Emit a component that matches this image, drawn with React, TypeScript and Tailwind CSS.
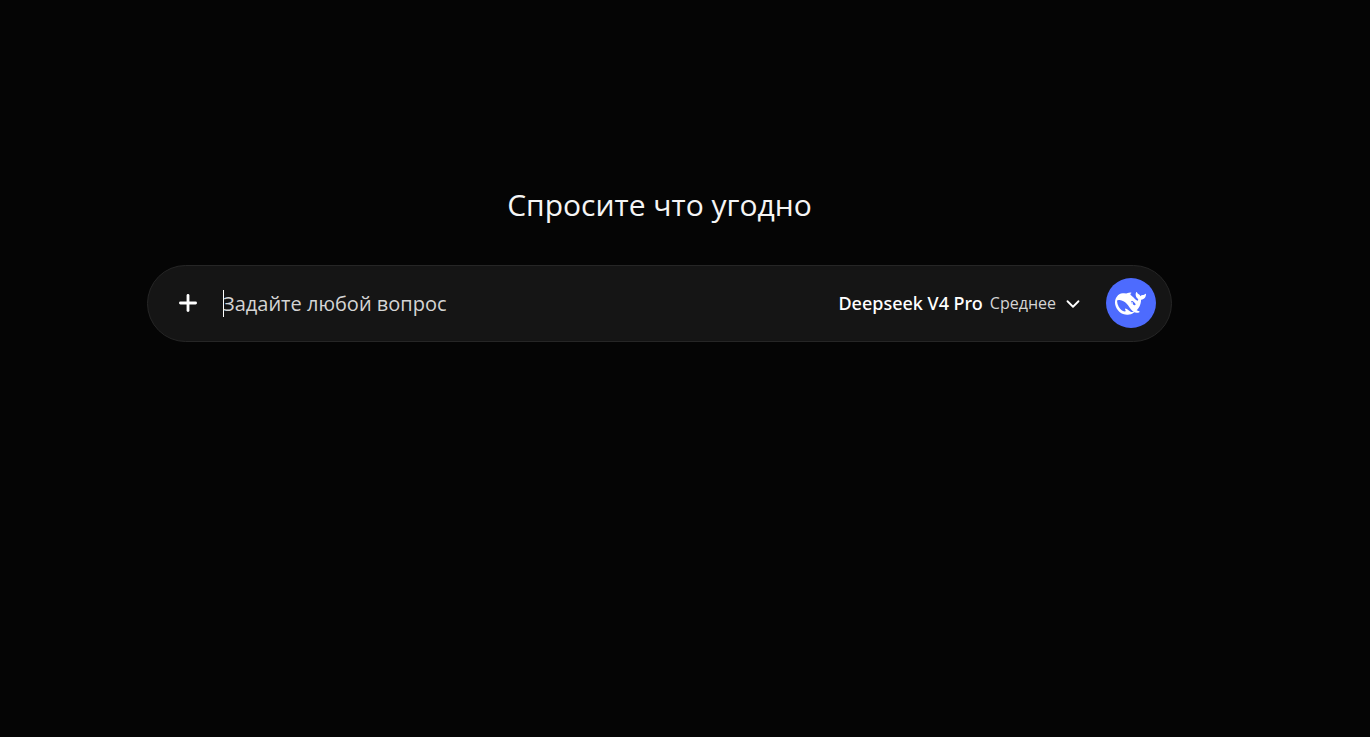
import { useState } from "react";
import { ChevronDown, Plus } from "lucide-react";

function WhaleIcon() {
  return (
    <svg viewBox="0 0 24 24" className="size-[31px]" fill="currentColor" aria-hidden="true">
      <path d="M23.748 4.482c-.254-.124-.364.113-.512.234-.051.039-.094.09-.137.136-.372.397-.806.657-1.373.626-.829-.046-1.537.214-2.163.848-.133-.782-.575-1.248-1.247-1.548-.352-.156-.708-.311-.955-.65-.172-.241-.219-.51-.305-.774-.055-.16-.11-.323-.293-.35-.2-.031-.278.136-.356.276-.313.572-.434 1.202-.422 1.84.027 1.436.633 2.58 1.838 3.393.137.093.172.187.129.323-.082.28-.18.552-.266.833-.055.179-.137.217-.329.14a5.526 5.526 0 01-1.736-1.18c-.857-.828-1.631-1.742-2.597-2.458a11.365 11.365 0 00-.689-.471c-.985-.957.13-1.743.388-1.836.27-.098.093-.432-.779-.428-.872.004-1.67.295-2.687.684a3.055 3.055 0 01-.465.137 9.597 9.597 0 00-2.883-.102c-1.885.21-3.39 1.102-4.497 2.623C.082 8.606-.231 10.684.152 12.85c.403 2.284 1.569 4.175 3.36 5.653 1.858 1.533 3.997 2.284 6.438 2.14 1.482-.085 3.133-.284 4.994-1.86.47.234.962.327 1.78.397.63.059 1.236-.03 1.705-.128.735-.156.684-.837.419-.961-2.155-1.004-1.682-.595-2.113-.926 1.096-1.296 2.746-2.642 3.392-7.003.05-.347.007-.565 0-.845-.004-.17.035-.237.23-.256a4.173 4.173 0 001.545-.475c1.396-.763 1.96-2.015 2.093-3.517.02-.23-.004-.467-.247-.588zM11.581 18c-2.089-1.642-3.102-2.183-3.52-2.16-.392.024-.321.471-.235.763.09.288.207.486.371.739.114.167.192.416-.113.603-.673.416-1.842-.14-1.897-.167-1.361-.802-2.5-1.86-3.301-3.307-.774-1.393-1.224-2.887-1.298-4.482-.02-.386.093-.522.477-.592a4.696 4.696 0 011.529-.039c2.132.312 3.946 1.265 5.468 2.774.868.86 1.525 1.887 2.202 2.891.72 1.066 1.494 2.082 2.48 2.914.348.292.625.514.891.677-.802.09-2.14.11-3.054-.614zm1-6.44a.306.306 0 01.415-.287.302.302 0 01.2.288.306.306 0 01-.31.307.303.303 0 01-.304-.308zm3.11 1.596c-.2.081-.399.151-.59.16a1.245 1.245 0 01-.798-.254c-.274-.23-.47-.358-.552-.758a1.73 1.73 0 01.016-.588c.07-.327-.008-.537-.239-.727-.187-.156-.426-.199-.688-.199a.559.559 0 01-.254-.078c-.11-.046-.2-.168-.114-.335.028-.054.16-.186.192-.21.356-.202.767-.136 1.146.016.352.144.618.408 1.001.782.391.451.462.576.685.914.176.265.336.537.445.848.067.195-.019.354-.25.452z" />
    </svg>
  );
}

export default function App() {
  const [question, setQuestion] = useState("");

  return (
    <main className="min-h-screen bg-[#050505] pt-[184px] pr-[51px] font-['Open_Sans','Noto_Sans',sans-serif] text-white">
      <div className="mx-auto w-full max-w-[1025px]">
        <h1 className="mb-10 text-center text-[30px] leading-[41px] text-[#f5f5f5]">Спросите что угодно</h1>

        <form
          className="flex items-center rounded-full border border-[#262626] bg-[#151515] pt-3 pr-[15px] pb-[13px] pl-[26px]"
          onSubmit={(e) => e.preventDefault()}
        >
          <button type="button" aria-label="Добавить" className="flex size-7 items-center justify-center">
            <Plus size={26} strokeWidth={2.6} />
          </button>

          {/* Caret bar before the prompt */}
          <span className="ml-[21px] h-[27px] w-px bg-white" />
          <input
            type="text"
            aria-label="Вопрос"
            value={question}
            onChange={(e) => setQuestion(e.target.value)}
            placeholder="Задайте любой вопрос"
            className="-ml-px h-8 min-w-0 flex-1 bg-transparent text-xl caret-transparent outline-none placeholder:text-[#d4d4d4]"
          />

          <button type="button" className="flex items-center whitespace-nowrap">
            <span className="font-['Noto_Sans','Open_Sans',sans-serif] text-lg font-medium">Deepseek V4 Pro</span>
            <span className="ml-[7px] text-base text-[#d4d4d4]">Среднее</span>
            <ChevronDown size={22} className="mt-px ml-1.5" />
          </button>

          <button
            type="submit"
            aria-label="Отправить"
            className="ml-[22px] flex size-[50px] shrink-0 items-center justify-center rounded-full bg-[#4d6bfe] pr-px"
          >
            <WhaleIcon />
          </button>
        </form>
      </div>
    </main>
  );
}
